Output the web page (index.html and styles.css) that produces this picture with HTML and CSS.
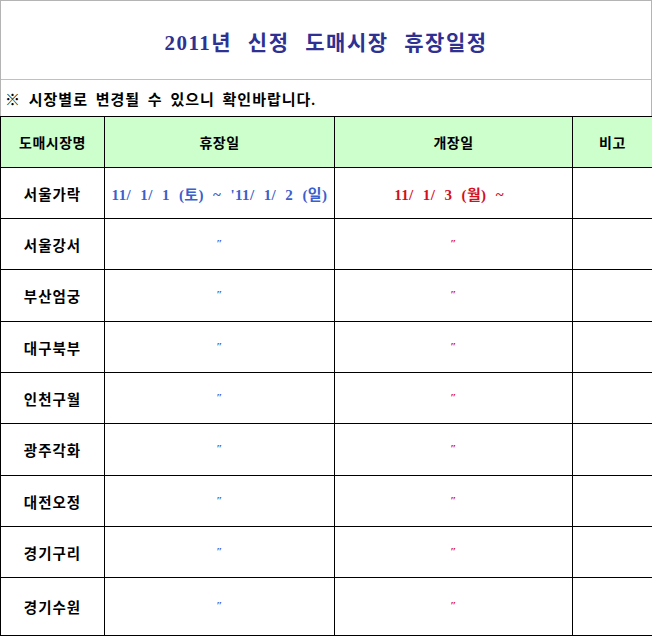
FILE: index.html
```html
<!DOCTYPE html>
<html lang="ko">
<head>
<meta charset="utf-8">
<link rel="stylesheet" href="styles.css">
</head>
<body>
<div class="sheet">
  <div class="head-box">
    <div class="title">2011년 신정 도매시장 휴장일정</div>
    <div class="notice">※ 시장별로 변경될 수 있으니 확인바랍니다.</div>
  </div>
  <table class="grid">
    <colgroup>
      <col class="c1"><col class="c2"><col class="c3"><col class="c4">
    </colgroup>
    <thead>
      <tr class="hdr">
        <th>도매시장명</th><th>휴장일</th><th>개장일</th><th>비고</th>
      </tr>
    </thead>
    <tbody>
      <tr class="r51"><td class="name">서울가락</td><td class="blue">11/ 1/ 1 (토) ~ '11/ 1/ 2 (일)</td><td class="red first">11/ 1/ 3 (월) ~</td><td></td></tr>
      <tr class="r51"><td class="name">서울강서</td><td class="blue"><span class="ditto">″</span></td><td class="red"><span class="ditto">″</span></td><td></td></tr>
      <tr class="r52"><td class="name">부산엄궁</td><td class="blue"><span class="ditto">″</span></td><td class="red"><span class="ditto">″</span></td><td></td></tr>
      <tr class="r51"><td class="name">대구북부</td><td class="blue"><span class="ditto">″</span></td><td class="red"><span class="ditto">″</span></td><td></td></tr>
      <tr class="r51"><td class="name">인천구월</td><td class="blue"><span class="ditto">″</span></td><td class="red"><span class="ditto">″</span></td><td></td></tr>
      <tr class="r52"><td class="name">광주각화</td><td class="blue"><span class="ditto">″</span></td><td class="red"><span class="ditto">″</span></td><td></td></tr>
      <tr class="r51"><td class="name">대전오정</td><td class="blue"><span class="ditto">″</span></td><td class="red"><span class="ditto">″</span></td><td></td></tr>
      <tr class="r51"><td class="name">경기구리</td><td class="blue"><span class="ditto">″</span></td><td class="red"><span class="ditto">″</span></td><td></td></tr>
      <tr class="r58"><td class="name">경기수원</td><td class="blue"><span class="ditto">″</span></td><td class="red"><span class="ditto">″</span></td><td></td></tr>
    </tbody>
  </table>
</div>
</body>
</html>
```

FILE: styles.css
```css
html, body {
  margin: 0;
  padding: 0;
  background: #ffffff;
}

.sheet {
  width: 652px;
  font-family: "Liberation Serif", "Noto Sans CJK KR", serif;
  color: #000;
}

.head-box {
  box-sizing: border-box;
  width: 652px;
  border-top: 1px solid #b4b4b4;
  border-left: 1px solid #b4b4b4;
  border-right: 1px solid #b4b4b4;
}

.title {
  height: 79px;
  box-sizing: border-box;
  border-bottom: 1px solid #c0c0c0;
  display: flex;
  align-items: center;
  justify-content: center;
  padding-top: 1px;
  font-size: 21px;
  font-weight: bold;
  color: #2e3192;
  word-spacing: 9px;
  letter-spacing: 1.5px;
}

.notice {
  height: 36px;
  box-sizing: border-box;
  display: flex;
  align-items: center;
  padding-left: 4px;
  font-size: 15px;
  font-weight: bold;
  word-spacing: 3px;
  letter-spacing: 1px;
}

.grid {
  border-collapse: collapse;
  width: 652px;
  table-layout: fixed;
}

.c1 { width: 104px; }
.c2 { width: 230px; }
.c3 { width: 238px; }
.c4 { width: 80px; }

.grid th,
.grid td {
  border: 1px solid #000;
  padding: 0;
  text-align: center;
  vertical-align: middle;
  font-weight: bold;
  font-size: 14px;
}

.hdr th {
  background: #ccffcc;
  height: 50px;
  letter-spacing: 0.5px;
}

.r51 td { height: 50px; }
.r52 td { height: 51px; }
.r58 td { height: 57px; }

.grid td.name {
  font-size: 14.5px;
  letter-spacing: 1px;
}

.grid td.blue {
  color: #3b5fcc;
  font-size: 15px;
  word-spacing: 5px;
  letter-spacing: 0.4px;
}

.grid td.red {
  color: #d4101c;
  font-size: 15px;
  word-spacing: 5px;
  letter-spacing: 0.4px;
}

.grid td.first {
  padding-right: 9px;
}

.ditto {
  display: inline-block;
  font-size: 11px;
  transform: translateY(-2px);
}
```
